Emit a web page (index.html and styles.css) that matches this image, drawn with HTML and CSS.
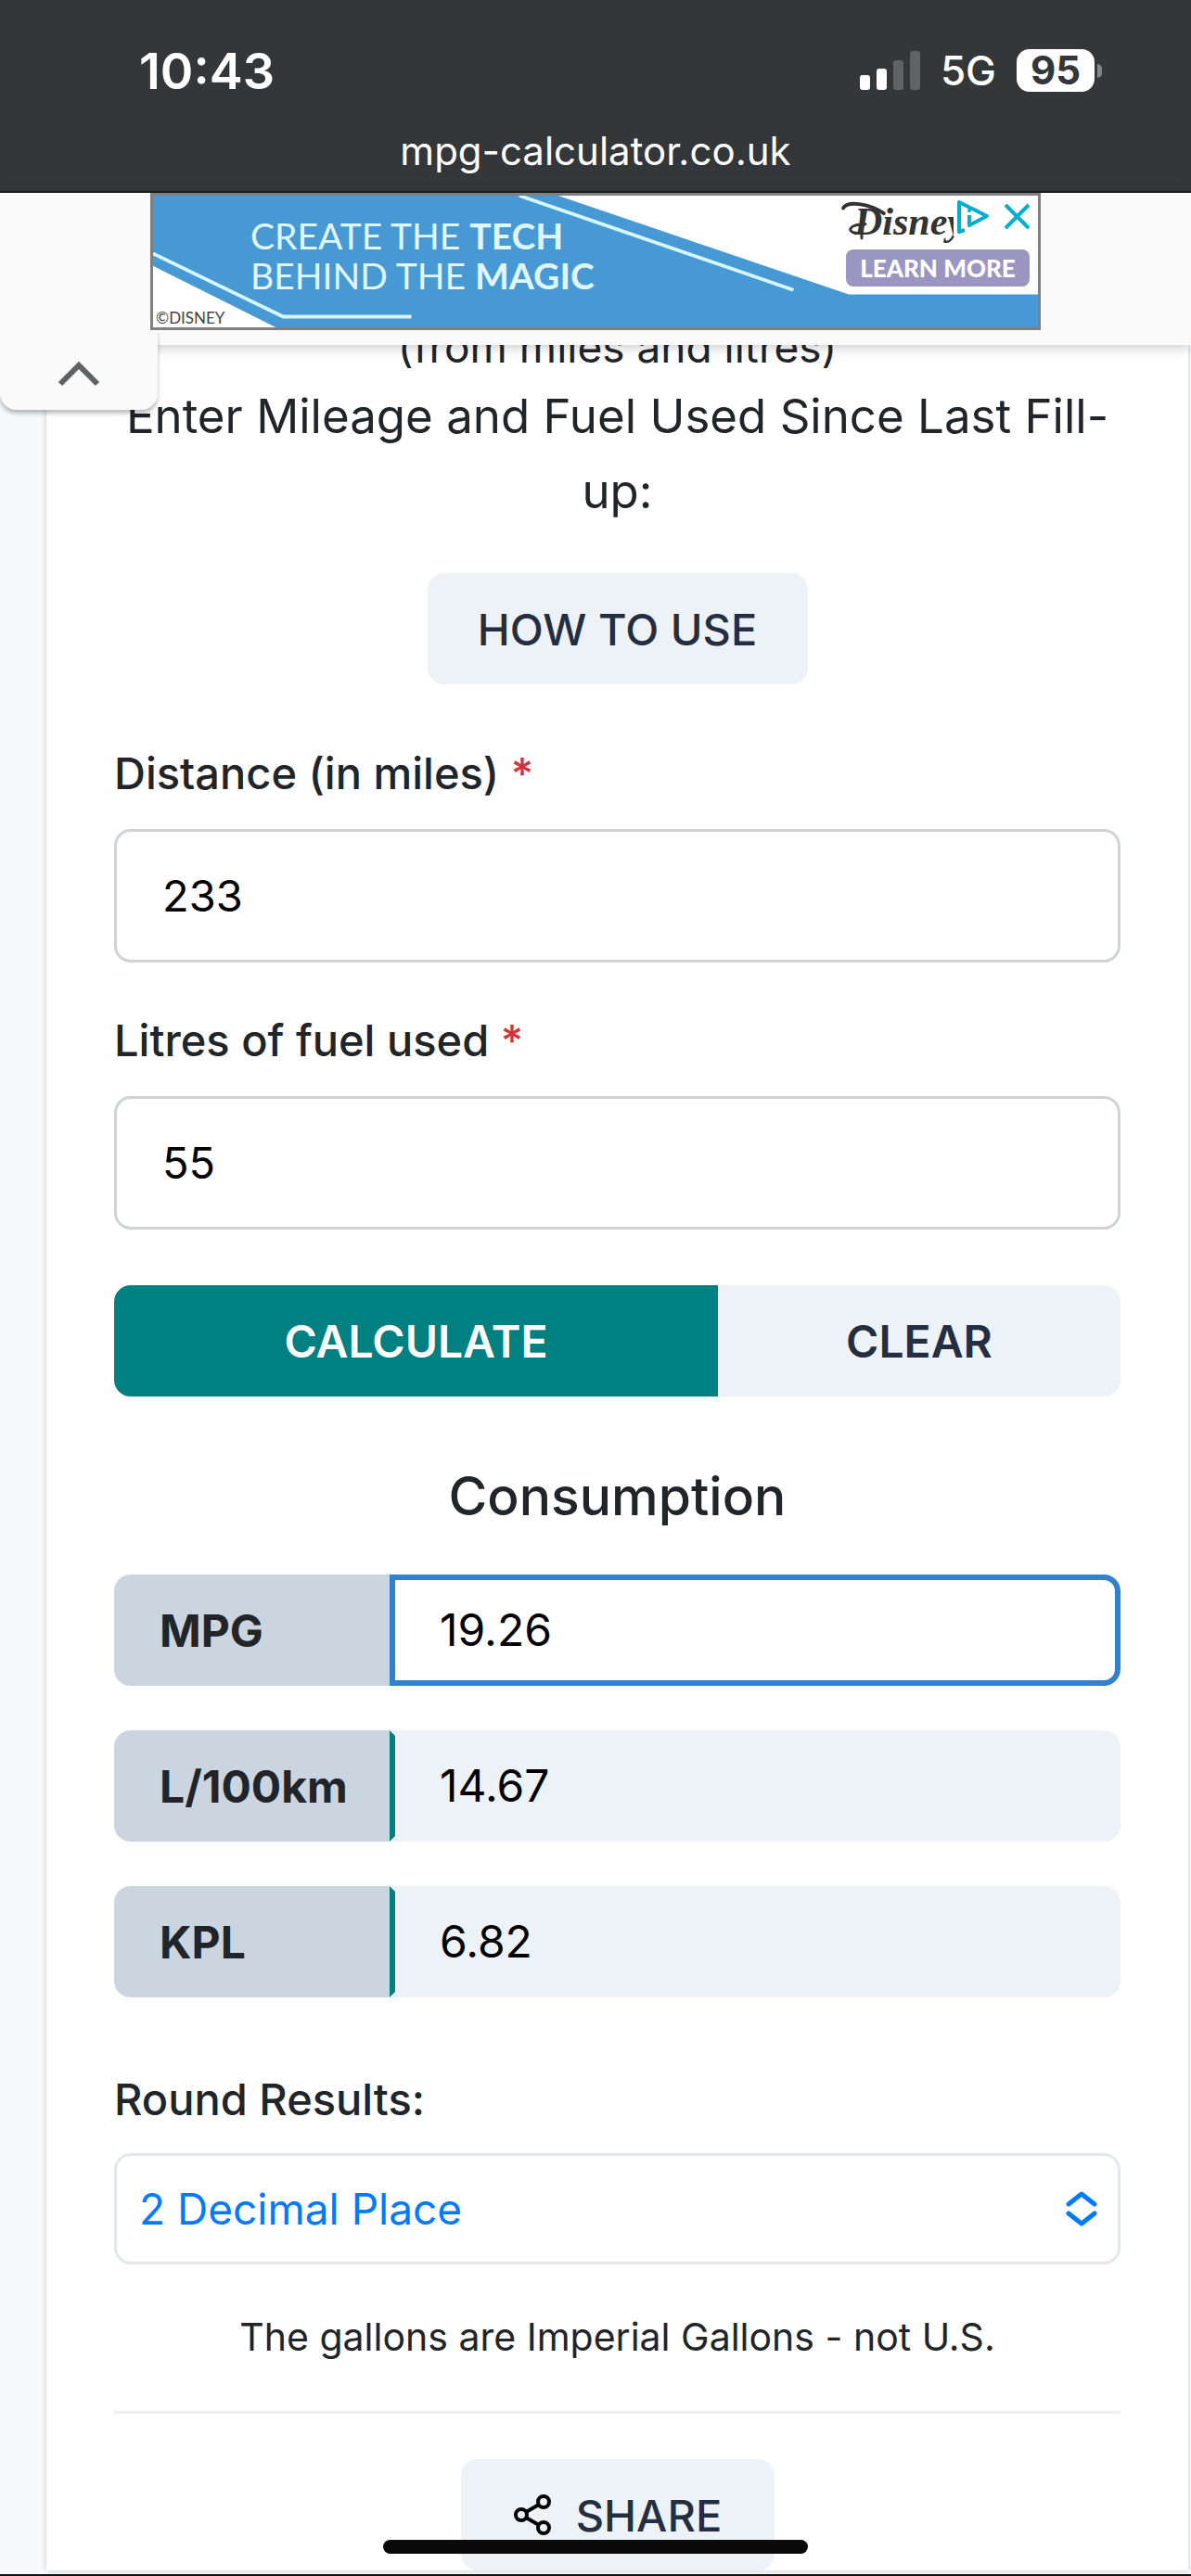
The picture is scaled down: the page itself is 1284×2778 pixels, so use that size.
FILE: index.html
```html
<!DOCTYPE html>
<html lang="en">
<head>
    <meta charset="UTF-8">
    <meta name="viewport" content="width=device-width, initial-scale=1.0">
    <title>MPG Calculator</title>
    <link rel="stylesheet" href="styles.css">
</head>
<body>
    <!-- Phone status bar and address -->
    <header class="top-bar">
        <div class="status">
            <span class="time">10:43</span>
            <div class="status-right">
                <svg class="signal" viewBox="0 0 65 42" aria-hidden="true">
                    <rect x="0" y="26" width="11" height="16" rx="3" fill="#fff"/>
                    <rect x="18" y="19" width="11" height="23" rx="3" fill="#fff"/>
                    <rect x="36" y="10" width="11" height="32" rx="3" fill="#606264"/>
                    <rect x="54" y="0" width="11" height="42" rx="3" fill="#606264"/>
                </svg>
                <span class="network">5G</span>
                <span class="battery">95</span>
            </div>
        </div>
        <div class="address">mpg-calculator.co.uk</div>
    </header>

    <!-- Anchor ad -->
    <aside class="ad-bar">
        <div class="ad">
            <svg class="ad-art" viewBox="0 0 959 148" preserveAspectRatio="none" aria-hidden="true">
                <rect width="959" height="148" fill="#4799d3"/>
                <path d="M439 0L754 111H959V0Z" fill="#fff"/>
                <path d="M0 79L133 148H0Z" fill="#fff"/>
                <path d="M0 65L141 136H280" fill="none" stroke="#d5f6ff" stroke-width="4"/>
                <path d="M397 0L694 106" fill="none" stroke="#d5f6ff" stroke-width="4"/>
                <path d="M748 14C752 6 775 8 792 20" fill="none" stroke="#333" stroke-width="4" stroke-linecap="round"/>
                <path d="M768 17V48M768 42C752 44 750 32 772 32" fill="none" stroke="#333" stroke-width="3" stroke-linecap="round"/>
            </svg>
            <p class="ad-text">CREATE THE <b>TECH</b><br>BEHIND THE <b>MAGIC</b></p>
            <span class="ad-copy">©DISNEY</span>
            <span class="ad-logo">Disney</span>
            <a class="ad-link" href="#">LEARN MORE</a>
            <svg class="ad-choices" viewBox="0 0 86 44" aria-hidden="true">
                <rect width="86" height="44" fill="#fff"/>
                <path d="M12 37L6 39V7L36 22L17 32V21" fill="none" stroke="#00aecd" stroke-width="4" stroke-linejoin="round"/>
                <circle cx="17" cy="16" r="2" fill="#00aecd"/>
                <path d="M56 10L81 35M81 10L56 35" stroke="#00aecd" stroke-width="4"/>
            </svg>
        </div>
        <button class="ad-toggle" aria-label="Collapse ad">
            <svg width="46" height="28" viewBox="0 0 46 28"><path d="M3 25L23 5L43 25" fill="none" stroke="#5f6368" stroke-width="6"/></svg>
        </button>
    </aside>

    <main class="card">
        <p class="intro clipped">(from miles and litres)</p>
        <p class="intro">Enter Mileage and Fuel Used Since Last Fill-up:</p>
        <button class="btn how-to">HOW TO USE</button>

        <form class="calculator">
            <label for="distance">Distance (in miles) <span class="required">*</span></label>
            <input class="field" type="text" id="distance" value="233">
            <label for="litres">Litres of fuel used <span class="required">*</span></label>
            <input class="field" type="text" id="litres" value="55">

            <div class="actions">
                <button class="calculate" type="button">CALCULATE</button>
                <button class="clear" type="button">CLEAR</button>
            </div>

            <h2>Consumption</h2>
            <div class="result">
                <label for="mpg">MPG</label>
                <input class="active" type="text" id="mpg" value="19.26" readonly>
            </div>
            <div class="result">
                <label for="l100">L/100km</label>
                <input type="text" id="l100" value="14.67" readonly>
            </div>
            <div class="result">
                <label for="kpl">KPL</label>
                <input type="text" id="kpl" value="6.82" readonly>
            </div>

            <label class="round-label" for="round">Round Results:</label>
            <div class="select-wrap">
                <select id="round">
                    <option>2 Decimal Place</option>
                </select>
                <svg class="select-arrows" viewBox="0 0 34 38" aria-hidden="true">
                    <path d="M3 14L17 3L31 14M3 24L17 35L31 24" fill="none" stroke="#007aff" stroke-width="5" stroke-linecap="round" stroke-linejoin="round"/>
                </svg>
            </div>
        </form>

        <p class="note">The gallons are Imperial Gallons - not U.S.</p>
        <hr>
        <button class="btn share">
            <svg width="42" height="45" viewBox="0 0 42 45" aria-hidden="true">
                <g fill="none" stroke="#000" stroke-width="4">
                    <circle cx="9" cy="22" r="6"/>
                    <circle cx="33" cy="8" r="6"/>
                    <circle cx="33" cy="36" r="6"/>
                    <path d="M14 19L28 11M14 25L28 33"/>
                </g>
            </svg>
            SHARE
        </button>
    </main>
    <div class="home-indicator"></div>
</body>
</html>
```
FILE: styles.css
```css
* {
    box-sizing: border-box;
}
body {
    margin: 0;
    height: 100vh;
    overflow: hidden;
    background: #f7fafc;
    color: #212529;
    font-family: Inter, "Liberation Sans", sans-serif;
    font-size: 47px;
    border-bottom: 2px solid #111;
}
p, h2 {
    margin: 0;
    font-weight: 400;
}
button, input, select {
    font: inherit;
    border: 0;
    border-radius: 18px;
}

/* Status bar */
.top-bar {
    height: 208px;
    background: #343739;
    border-bottom: 2px solid #1b1d1e;
    color: #fff;
}
.status {
    display: flex;
    justify-content: space-between;
    align-items: center;
    padding: 44px 94px 0 150px;
    height: 108px;
}
.time {
    font-size: 54px;
    font-weight: 600;
}
.status-right {
    display: flex;
    align-items: center;
    gap: 22px;
}
.signal {
    width: 65px;
    height: 42px;
}
.network {
    font-size: 44px;
    font-weight: 500;
}
.battery {
    position: relative;
    width: 84px;
    height: 46px;
    margin-right: 10px;
    border-radius: 14px;
    background: #fff;
    color: #343739;
    font-size: 42px;
    font-weight: 700;
    line-height: 46px;
    text-align: center;
}
.battery::after {
    content: "";
    position: absolute;
    right: -8px;
    top: 16px;
    width: 5px;
    height: 15px;
    border-radius: 0 5px 5px 0;
    background: #848688;
}
.address {
    padding-top: 28px;
    font-size: 42px;
    line-height: 54px;
    text-align: center;
}

/* Ad */
.ad-bar {
    position: relative;
    z-index: 1;
    height: 164px;
    background: #fafafa;
    box-shadow: 0 3px 12px #00000033;
}
.ad {
    position: relative;
    width: 960px;
    height: 148px;
    margin: 0 auto;
    border: 3px solid #808080;
    overflow: hidden;
    color: #fff;
}
.ad-art {
    display: block;
    width: 100%;
    height: 100%;
}
.ad-text {
    position: absolute;
    left: 105px;
    top: 22px;
    font-family: Lato, sans-serif;
    font-size: 39px;
    line-height: 43px;
    color: #e0f6ff;
}
.ad-copy {
    position: absolute;
    left: 3px;
    bottom: 0;
    font-family: Lato, sans-serif;
    font-size: 17px;
    line-height: 20px;
    color: #444;
}
.ad-logo {
    position: absolute;
    left: 756px;
    top: 4px;
    font-family: "Liberation Serif", serif;
    font-size: 42px;
    font-style: italic;
    font-weight: 700;
    color: #333;
}
.ad-link {
    position: absolute;
    right: 9px;
    top: 58px;
    width: 198px;
    border-radius: 8px;
    background: #9b95c2;
    color: #fff;
    font-family: Lato, sans-serif;
    font-size: 26px;
    font-weight: 900;
    line-height: 40px;
    text-align: center;
    text-decoration: none;
}
.ad-choices {
    position: absolute;
    right: 5px;
    top: 0;
    width: 86px;
    height: 44px;
}
.ad-toggle {
    position: absolute;
    left: 0;
    top: 148px;
    width: 170px;
    height: 86px;
    padding: 0;
    border-radius: 0 0 18px 18px;
    background: #fafafa;
    box-shadow: 0 4px 4px #00000040;
}

/* Calculator */
.card {
    margin: 0 3px 0 50px;
    padding: 0 73px;
    background: #fff;
    box-shadow: 0 0 6px #00000033;
    text-align: center;
}
.intro {
    font-size: 51px;
    line-height: 81px;
}
.clipped {
    height: 36px;
    font-size: 46px;
    line-height: 4px;
}
.btn {
    height: 120px;
    background: #edf2f7;
    color: #252e41;
    font-weight: 500;
}
.how-to {
    width: 410px;
    margin-top: 48px;
}
.calculator {
    display: flex;
    flex-direction: column;
    text-align: left;
}
.calculator > label {
    margin-top: 50px;
    font-weight: 500;
    line-height: 68px;
}
.calculator > label:first-child {
    margin-top: 62px;
}
.required {
    color: #d3343c;
}
.field {
    height: 144px;
    margin-top: 26px;
    padding: 0 49px 2px;
    border: 3px solid #d0d3d6;
    color: #000;
}
.actions {
    display: flex;
    margin-top: 60px;
}
.actions button {
    height: 120px;
    padding: 0;
    font-size: 48px;
    font-weight: 600;
}
.actions .calculate {
    flex: 3;
    border-radius: 18px 0 0 18px;
    background: #008080;
    color: #fff;
}
.actions .clear {
    flex: 2;
    border-radius: 0 18px 18px 0;
    background: #edf2f7;
    color: #252e41;
}
h2 {
    margin: 72px 0 48px;
    font-size: 57px;
    font-weight: 500;
    line-height: 72px;
    text-align: center;
}
.result {
    display: flex;
    height: 120px;
    margin-bottom: 48px;
    font-size: 48px;
}
.result label {
    width: 297px;
    padding-left: 49px;
    border-radius: 18px 0 0 18px;
    background: #cbd5e0;
    font-weight: 700;
    line-height: 122px;
}
.result input {
    flex: 1;
    min-width: 0;
    padding: 0 48px 2px;
    border: 6px solid #edf2f7;
    border-left-color: #008080;
    border-radius: 0 18px 18px 0;
    background: #edf2f7;
    color: #000;
}
.result .active {
    border-color: #3182ce;
    background: #fff;
}
.calculator > .round-label {
    margin-top: 28px;
}
.select-wrap {
    position: relative;
    margin-top: 24px;
}
select {
    width: 100%;
    height: 120px;
    padding: 0 24px;
    border: 3px solid #e2e8ec;
    appearance: none;
    background: #fff;
    color: #007aff;
    font-size: 46px;
}
.select-arrows {
    position: absolute;
    right: 25px;
    top: 41px;
    width: 34px;
    height: 38px;
}
.note {
    margin-top: 48px;
    font-size: 41px;
    line-height: 60px;
}
hr {
    height: 3px;
    margin: 50px 0 49px;
    border: 0;
    background: #edf0f2;
}
.share {
    display: flex;
    align-items: center;
    justify-content: center;
    gap: 26px;
    width: 338px;
    margin: 0 auto 6px;
}
.home-indicator {
    position: fixed;
    z-index: 2;
    left: 50%;
    bottom: 24px;
    width: 458px;
    height: 15px;
    margin-left: -229px;
    border-radius: 8px;
    background: #0a0a0a;
}
```
